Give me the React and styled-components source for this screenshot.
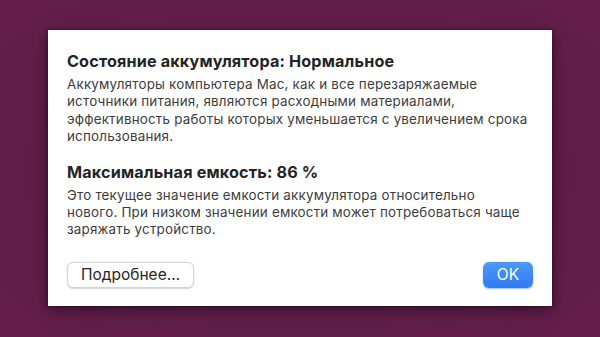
import React from "react";
import styled, { createGlobalStyle } from "styled-components";

const Global = createGlobalStyle`
  html, body { margin: 0; padding: 0; }
  body {
    width: 600px;
    height: 337px;
    overflow: hidden;
    background: #5f1d48;
    font-family: Inter, "Noto Sans", "Liberation Sans", sans-serif;
    -webkit-font-smoothing: antialiased;
  }
`;

const Stage = styled.div`
  width: 600px;
  height: 337px;
  box-sizing: border-box;
  padding: 30px 0 0 48px;
  background: radial-gradient(ellipse at center, #5a1b45 0%, #611e4a 70%, #641f4c 100%);
`;

const Dialog = styled.div`
  width: 504px;
  height: 276px;
  box-sizing: border-box;
  background: #ffffff;
  padding: 21px 19px 18px 19px;
  display: flex;
  flex-direction: column;
  box-shadow: 0 4px 14px rgba(20, 0, 12, 0.55), 0 0 2px rgba(20, 0, 12, 0.5);
`;

const Heading = styled.h2`
  margin: 0 0 ${(p) => p.$gap}px 0;
  font-size: 16.2px;
  line-height: 20px;
  font-weight: 700;
  color: #242424;
  letter-spacing: 0.15px;
`;

const Text = styled.p`
  margin: 0 0 ${(p) => p.$after}px 0;
  font-size: 13.4px;
  line-height: 17.4px;
  font-weight: 400;
  color: #3c3c3c;
  letter-spacing: 0.2px;
  white-space: nowrap;
`;

const Footer = styled.div`
  margin-top: auto;
  display: flex;
  justify-content: space-between;
  align-items: center;
`;

const Button = styled.button`
  font-family: inherit;
  height: 26px;
  box-sizing: border-box;
  border-radius: 6px;
  font-size: 15.5px;
  line-height: 1;
  padding: 0 12px 1px;
  min-width: ${(p) => (p.$primary ? 50 : 127)}px;
  border: ${(p) => (p.$primary ? "none" : "0.5px solid #d4d4d4")};
  color: ${(p) => (p.$primary ? "#ffffff" : "#262626")};
  background: ${(p) =>
    p.$primary ? "linear-gradient(#4d98fb, #2f7cf2)" : "#ffffff"};
  box-shadow: ${(p) =>
    p.$primary
      ? "0 0.5px 1.5px rgba(0,60,160,0.35)"
      : "0 0.5px 1.5px rgba(0,0,0,0.18)"};
  cursor: default;
`;

export default function App() {
  return (
    <>
      <Global />
      <Stage>
        <Dialog>
          <Heading $gap={5}>Состояние аккумулятора: Нормальное</Heading>
          <Text $after={16}>
            Аккумуляторы компьютера Mac, как и все перезаряжаемые
            <br />
            источники питания, являются расходными материалами,
            <br />
            эффективность работы которых уменьшается с увеличением срока
            <br />
            использования.
          </Text>
          <Heading $gap={5}>Максимальная емкость: 86 %</Heading>
          <Text $after={0}>
            Это текущее значение емкости аккумулятора относительно
            <br />
            нового. При низком значении емкости может потребоваться чаще
            <br />
            заряжать устройство.
          </Text>
          <Footer>
            <Button>Подробнее…</Button>
            <Button $primary>OK</Button>
          </Footer>
        </Dialog>
      </Stage>
    </>
  );
}
